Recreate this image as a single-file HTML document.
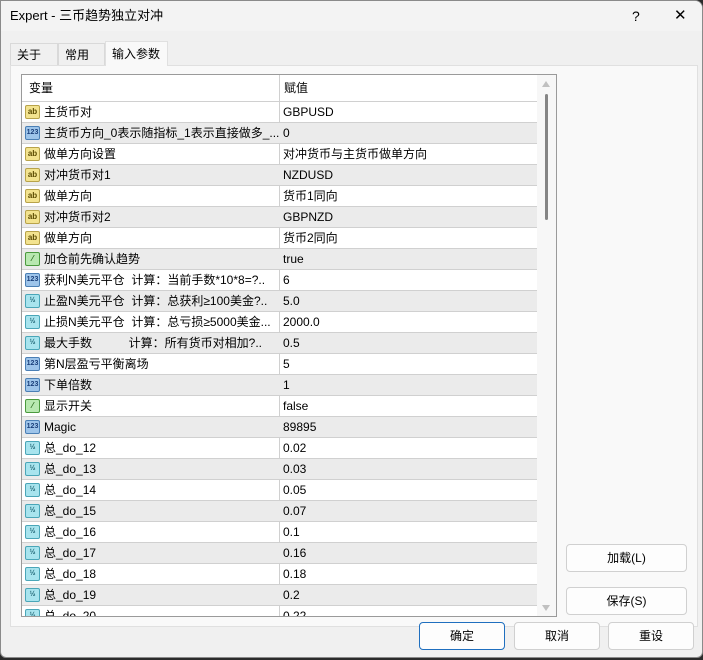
<!DOCTYPE html>
<html><head><meta charset="utf-8"><style>
*{margin:0;padding:0;box-sizing:border-box}
body{width:703px;height:660px;background:#2b2b2b;font-family:"Liberation Sans","Noto Sans CJK SC",sans-serif;font-size:12px;color:#000;position:relative;overflow:hidden}
.win{position:absolute;left:0;top:0;width:703px;height:658px;background:#f0f0f0;border:1px solid #8a8a8a;border-radius:0 8px 6px 6px;overflow:hidden}
.title{height:30px;background:#f3f3f3;position:relative;font-size:13px;line-height:30px}
.title span{position:absolute;left:9px;top:0}
.q{position:absolute;left:631px;top:0;font-size:14px}
.x{position:absolute;left:673px;top:0;font-size:15px}
.tab{position:absolute;top:42px;height:23px;padding:0 6px;line-height:22px;font-size:12px;border:1px solid #d9d9d9;border-bottom:none;background:#f0f0f0}
.pane{position:absolute;left:9px;top:64px;width:688px;height:562px;background:#f9f9f9;border:1px solid #e0e0e0}
.tbl{position:absolute;left:20px;top:73px;width:536px;height:543px;border:1px solid #9a9a9a;background:#fff;overflow:hidden}
.hdr{position:absolute;left:0;top:0;width:515px;height:26px;background:#fff;line-height:26px}
.hdr span{position:absolute;top:0}
.row{position:absolute;left:0;width:515px;height:21px;border-top:1px solid #d0d0d0;line-height:20px}
.row.g{background:#ebebeb}
.row .n{position:absolute;left:22px;top:0;height:20px;white-space:nowrap}
.row .v{position:absolute;left:261px;top:0;height:20px}
.col{position:absolute;left:257px;top:0;width:1px;height:543px;background:#d0d0d0}
.ic{position:absolute;left:3px;top:3px;width:15px;height:14px;border-radius:2px;font-size:8px;line-height:12px;text-align:center;font-weight:bold}
.ab{background:#f3e38f;border:1px solid #b8a34a;color:#5a4a00}
.n1{background:#9dc4ea;border:1px solid #4a7fb5;color:#1a3f7a;font-size:7px}
.hf{background:#a8e4ee;border:1px solid #4aa6b8;color:#1a6070;font-size:7px}
.tf{background:#b8e8b0;border:1px solid #4a9a3e;color:#2a6a1e}
.sb{position:absolute;left:515px;top:0;width:19px;height:541px;background:#f7f7f7}
.btn{position:absolute;height:28px;border:1px solid #d0d0d0;border-radius:4px;background:#fdfdfd;text-align:center;line-height:26px;font-size:12px}
</style></head><body>
<div class="win">
<div class="title"><span>Expert - 三币趋势独立对冲</span><div class="q">?</div><div class="x">✕</div></div>
<div class="tab" style="left:9px;width:48px">关于</div>
<div class="tab" style="left:57px;width:47px">常用</div>
<div class="pane"></div>
<div class="tab" style="left:104px;top:40px;height:25px;width:63px;line-height:24px;background:#f9f9f9;border-color:#e0e0e0">输入参数</div>
<div class="tbl">
<div class="hdr"><span style="left:7px">变量</span><span style="left:262px">赋值</span></div>
<div class="col"></div>
<div class="row" style="top:26px"><div class="ic ab">ab</div><span class="n">主货币对</span><span class="v">GBPUSD</span></div>
<div class="row g" style="top:47px"><div class="ic n1">123</div><span class="n">主货币方向_0表示随指标_1表示直接做多_...</span><span class="v">0</span></div>
<div class="row" style="top:68px"><div class="ic ab">ab</div><span class="n">做单方向设置</span><span class="v">对冲货币与主货币做单方向</span></div>
<div class="row g" style="top:89px"><div class="ic ab">ab</div><span class="n">对冲货币对1</span><span class="v">NZDUSD</span></div>
<div class="row" style="top:110px"><div class="ic ab">ab</div><span class="n">做单方向</span><span class="v">货币1同向</span></div>
<div class="row g" style="top:131px"><div class="ic ab">ab</div><span class="n">对冲货币对2</span><span class="v">GBPNZD</span></div>
<div class="row" style="top:152px"><div class="ic ab">ab</div><span class="n">做单方向</span><span class="v">货币2同向</span></div>
<div class="row g" style="top:173px"><div class="ic tf">⁄</div><span class="n">加仓前先确认趋势</span><span class="v">true</span></div>
<div class="row" style="top:194px"><div class="ic n1">123</div><span class="n">获利N美元平仓&nbsp; 计算：当前手数*10*8=?..</span><span class="v">6</span></div>
<div class="row g" style="top:215px"><div class="ic hf">½</div><span class="n">止盈N美元平仓&nbsp; 计算：总获利≥100美金?..</span><span class="v">5.0</span></div>
<div class="row" style="top:236px"><div class="ic hf">½</div><span class="n">止损N美元平仓&nbsp; 计算：总亏损≥5000美金...</span><span class="v">2000.0</span></div>
<div class="row g" style="top:257px"><div class="ic hf">½</div><span class="n">最大手数&nbsp;&nbsp;&nbsp;&nbsp;&nbsp;&nbsp;&nbsp;&nbsp;&nbsp;&nbsp; 计算：所有货币对相加?..</span><span class="v">0.5</span></div>
<div class="row" style="top:278px"><div class="ic n1">123</div><span class="n">第N层盈亏平衡离场</span><span class="v">5</span></div>
<div class="row g" style="top:299px"><div class="ic n1">123</div><span class="n">下单倍数</span><span class="v">1</span></div>
<div class="row" style="top:320px"><div class="ic tf">⁄</div><span class="n">显示开关</span><span class="v">false</span></div>
<div class="row g" style="top:341px"><div class="ic n1">123</div><span class="n">Magic</span><span class="v">89895</span></div>
<div class="row" style="top:362px"><div class="ic hf">½</div><span class="n">总_do_12</span><span class="v">0.02</span></div>
<div class="row g" style="top:383px"><div class="ic hf">½</div><span class="n">总_do_13</span><span class="v">0.03</span></div>
<div class="row" style="top:404px"><div class="ic hf">½</div><span class="n">总_do_14</span><span class="v">0.05</span></div>
<div class="row g" style="top:425px"><div class="ic hf">½</div><span class="n">总_do_15</span><span class="v">0.07</span></div>
<div class="row" style="top:446px"><div class="ic hf">½</div><span class="n">总_do_16</span><span class="v">0.1</span></div>
<div class="row g" style="top:467px"><div class="ic hf">½</div><span class="n">总_do_17</span><span class="v">0.16</span></div>
<div class="row" style="top:488px"><div class="ic hf">½</div><span class="n">总_do_18</span><span class="v">0.18</span></div>
<div class="row g" style="top:509px"><div class="ic hf">½</div><span class="n">总_do_19</span><span class="v">0.2</span></div>
<div class="row" style="top:530px"><div class="ic hf">½</div><span class="n">总_do_20</span><span class="v">0.22</span></div>
<div class="sb"><div style="position:absolute;left:5px;top:6px;width:0;height:0;border-left:4px solid transparent;border-right:4px solid transparent;border-bottom:6px solid #c0c0c0"></div><div style="position:absolute;left:8px;top:19px;width:3px;height:126px;background:#858585;border-radius:2px"></div><div style="position:absolute;left:5px;top:530px;width:0;height:0;border-left:4px solid transparent;border-right:4px solid transparent;border-top:6px solid #c0c0c0"></div></div>
</div>
<div class="btn" style="left:565px;top:543px;width:121px">加载(L)</div>
<div class="btn" style="left:565px;top:586px;width:121px">保存(S)</div>
<div class="btn" style="left:418px;top:621px;width:86px;border:1px solid #1f6fbf">确定</div>
<div class="btn" style="left:513px;top:621px;width:86px">取消</div>
<div class="btn" style="left:607px;top:621px;width:86px">重设</div>
</div>
</body></html>
